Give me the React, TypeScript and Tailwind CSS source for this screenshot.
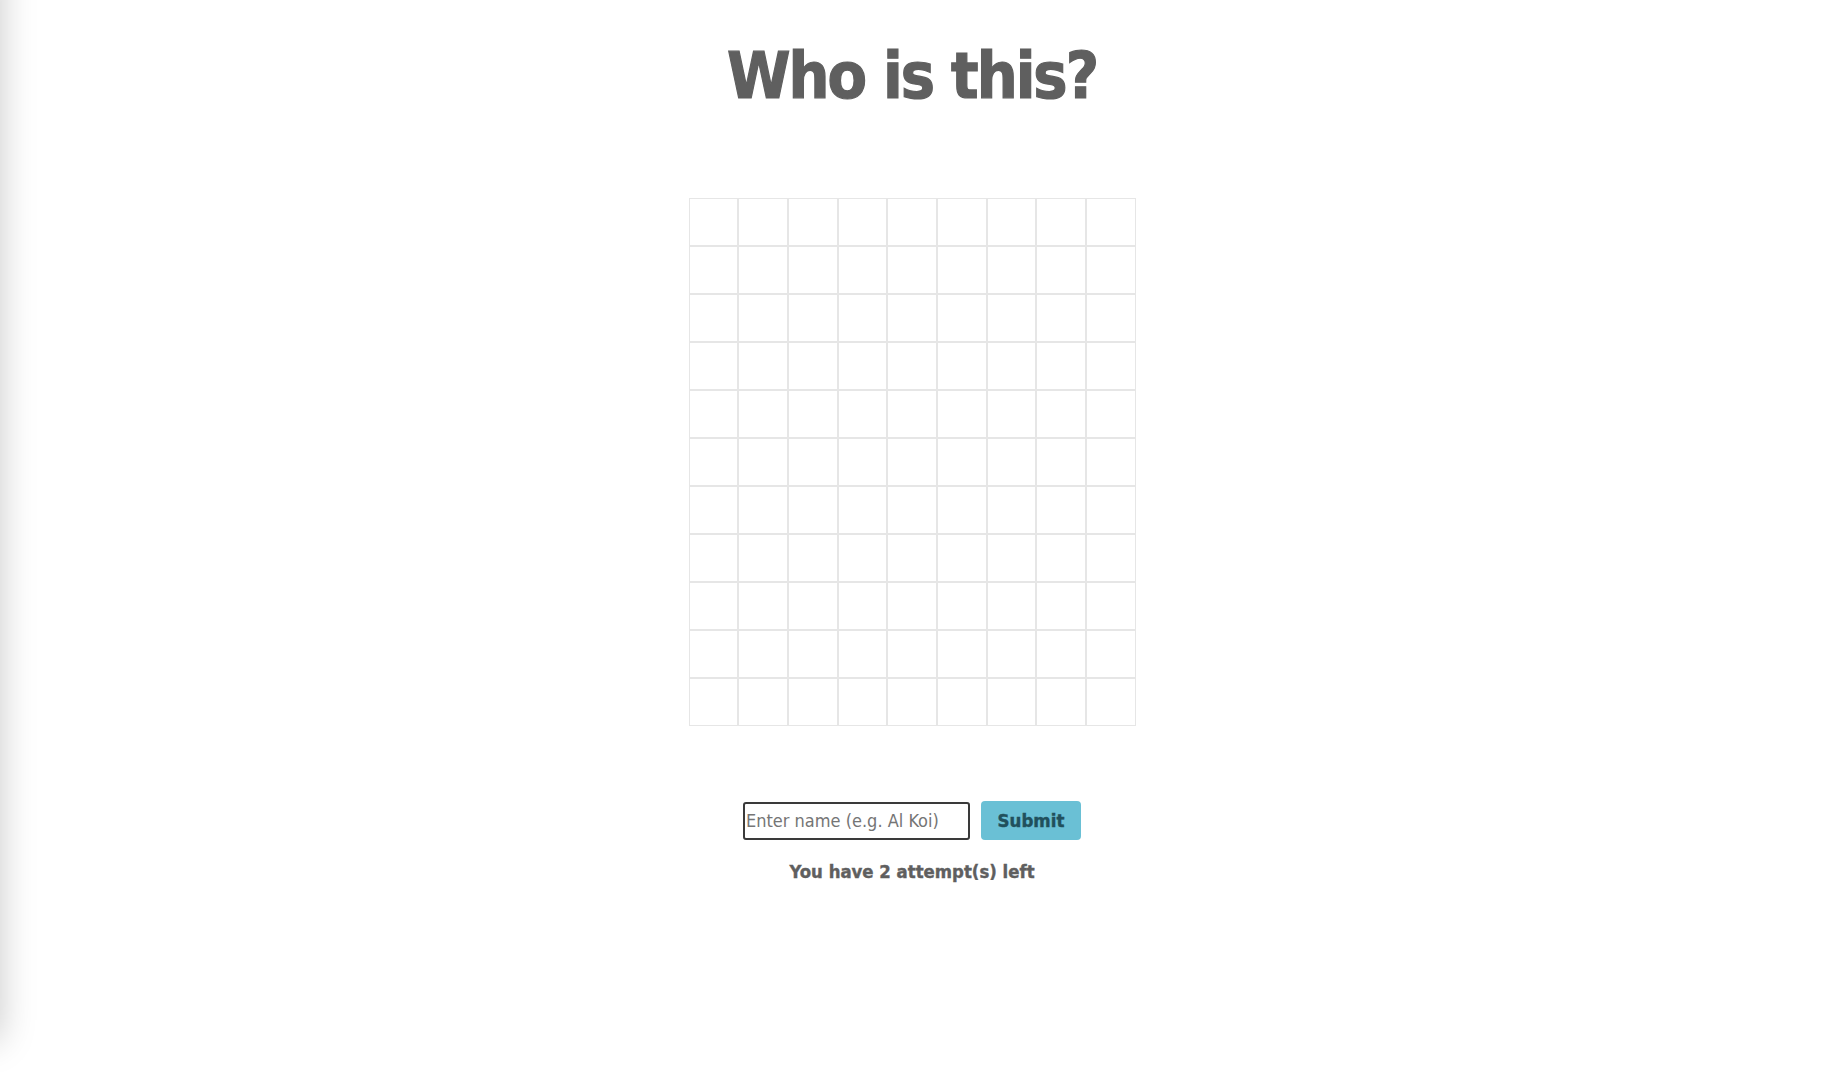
import React from "react";

const ROWS = 11;
const COLS = 9;

export default function App() {
    const cells = Array.from({ length: ROWS * COLS }, (_, i) => i);

    return (
        <div className="relative min-h-[1090px] w-full overflow-hidden bg-white font-['DejaVu_Sans_Condensed','DejaVu_Sans',sans-serif]">
            {/* shadow from an off-screen panel on the left */}
            <div className="absolute -left-[40px] top-[-40px] h-[1080px] w-[40px] bg-white shadow-[0_0_36px_rgba(0,0,0,0.22)]" />

            <div className="flex w-full flex-col items-center pr-3">
                <h1 className="mt-[36px] text-[64px] font-bold leading-[80px] tracking-[-2px] text-[#5f5f5f] [font-stretch:condensed] [-webkit-text-stroke:1.2px_#5f5f5f]">
                    Who is this?
                </h1>

                <div className="mt-[82px] grid w-[447px] grid-cols-9">
                    {cells.map((i) => (
                        <div key={i} className="h-12 border border-[#e6e6e6] bg-white" />
                    ))}
                </div>

                <div className="mt-[75px] flex items-center gap-[11px]">
                    <input
                        type="text"
                        placeholder="Enter name (e.g. Al Koi)"
                        className="h-[38px] w-[227px] rounded-[3px] border-2 border-[#3a3a3a] px-[1px] text-[18px] text-[#333] placeholder-[#757575] outline-none [font-stretch:condensed]"
                    />
                    <button
                        type="button"
                        className="h-[39px] w-[100px] rounded-[4px] bg-[#6ac0d5] text-[18.5px] font-bold text-[#21505c] [font-stretch:condensed] [-webkit-text-stroke:0.4px_#21505c]"
                    >
                        Submit
                    </button>
                </div>

                <p className="mt-[18px] text-[18.4px] font-bold text-[#5f5f5f] [font-stretch:condensed] [-webkit-text-stroke:0.4px_#5f5f5f]">
                    You have 2 attempt(s) left
                </p>
            </div>
        </div>
    );
}
